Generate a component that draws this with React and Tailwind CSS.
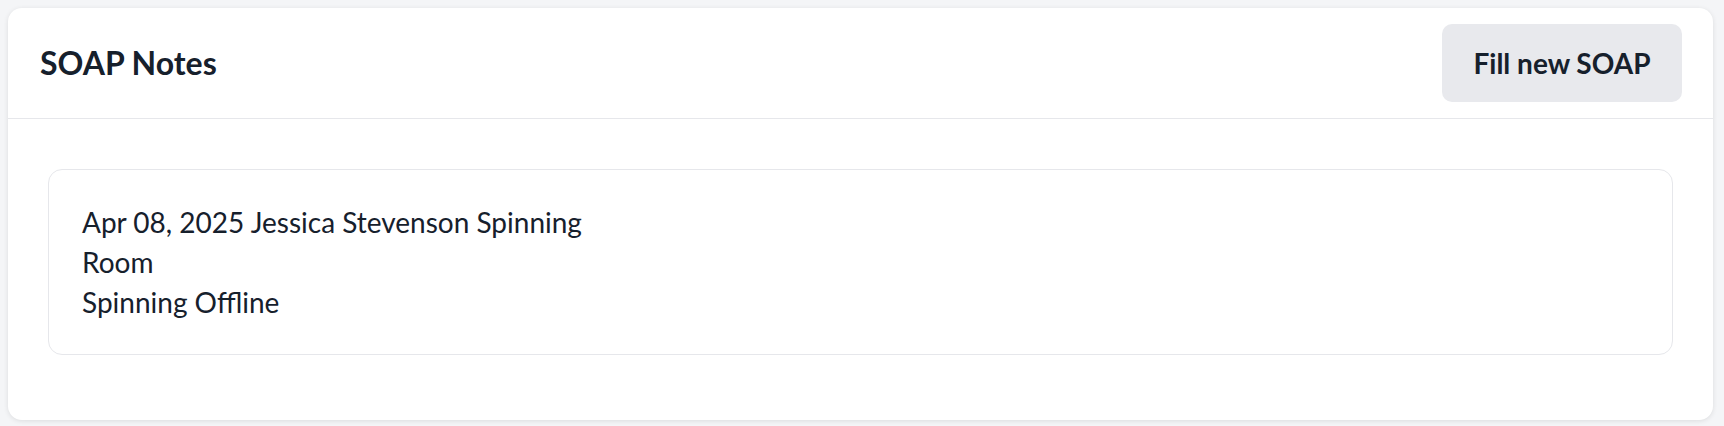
import React from 'react'

const notes = [
  { id: 1, title: 'Apr 08, 2025 Jessica Stevenson Spinning Room', subtitle: 'Spinning Offline' },
]

const App = () => {
  return (
    <div className="min-h-[426px] bg-[#f4f5f7] pt-2 pl-2 pr-[11px] pb-[7px] font-['Lato',sans-serif] text-[#16202c]">
      <div className="bg-white rounded-[14px] shadow-[0_1px_5px_rgba(0,0,0,0.10)]">
        <div className="flex items-center justify-between pl-8 pr-[31px] py-4 border-b border-[#e6e7eb]">
          <h2 className="text-[32px] font-bold">SOAP Notes</h2>
          <button className="w-[240px] h-[78px] rounded-[10px] bg-[#e8e9ed] text-[28px] font-bold">
            Fill new SOAP
          </button>
        </div>

        <div className="pt-[50px] pb-[65px] pl-[40px] pr-[40px]">
          {notes.map((note) => (
            <div key={note.id} className="border border-[#e6e7eb] rounded-[14px] pl-[33px] pr-8 py-8">
              <p className="w-[530px] text-[28px] leading-[40px]">{note.title}</p>
              <p className="text-[28px] leading-[40px]">{note.subtitle}</p>
            </div>
          ))}
        </div>
      </div>
    </div>
  )
}

export default App
